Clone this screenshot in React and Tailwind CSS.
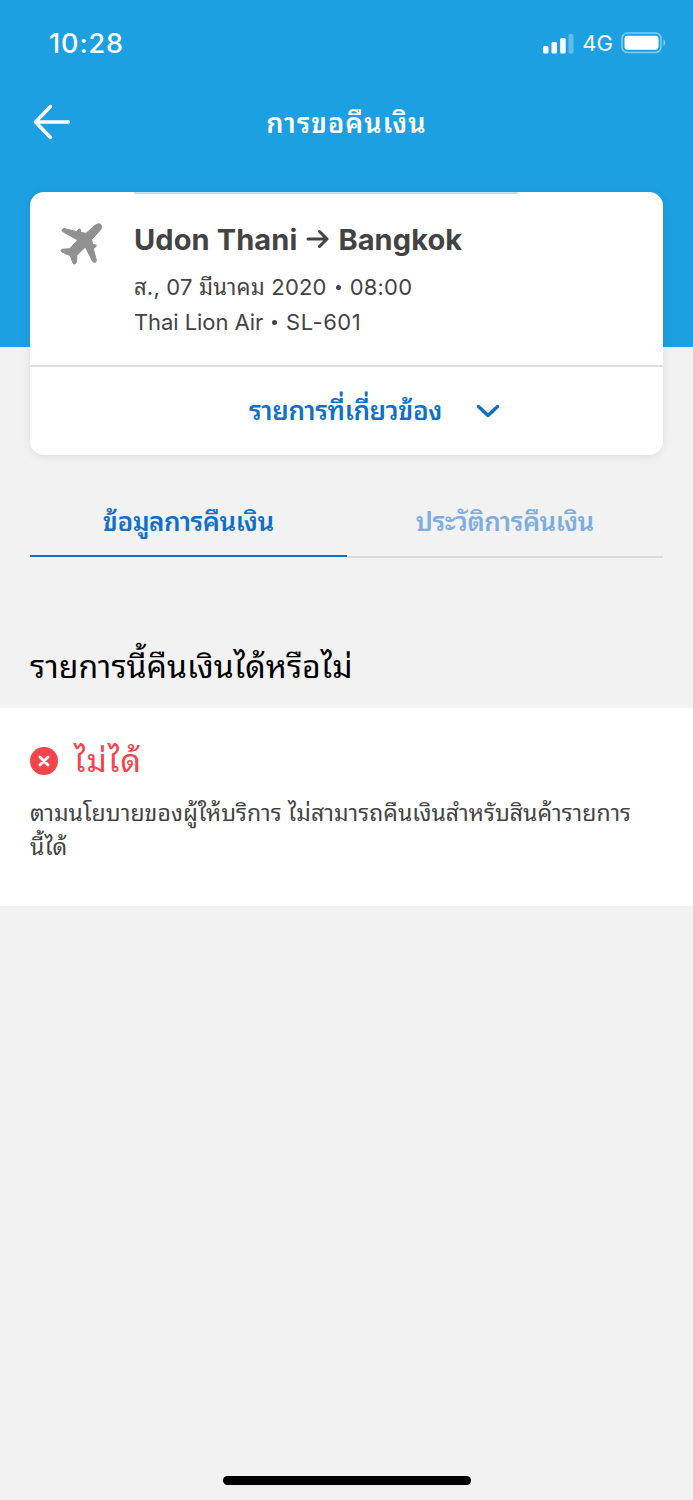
const StatusBar = () => (
  <div className="flex h-[86px] items-center justify-between pl-[49px] pr-[26px] text-white">
    <span className="text-[27px] font-medium leading-none tracking-[0.9px]">10:28</span>
    <div className="flex items-center">
      <svg className="h-[21px] w-[32px]" viewBox="0 0 32 21" fill="currentColor">
        <rect x="1" y="13" width="5.500" height="7.500" rx="1.500" />
        <rect x="9.500" y="9" width="5.500" height="11.500" rx="1.500" />
        <rect x="18.200" y="5" width="5.500" height="15.500" rx="1.500" />
        <rect x="26.500" y="1" width="5" height="19.500" rx="1.500" opacity="0.3" />
      </svg>
      <span className="ml-[8px] text-[22px] leading-none">4G</span>
      <svg className="ml-[8px] h-[22px] w-[46px]" viewBox="0 0 46 22" fill="none">
        <rect x="1" y="1" width="39" height="19.500" rx="5.500" stroke="white" strokeWidth="1.600" opacity="0.45" />
        <rect x="3.500" y="3.700" width="34" height="14" rx="3" fill="white" />
        <path d="M42.500 7.500v6.500c2.200-1.200 2.200-5.300 0-6.500z" fill="white" opacity="0.5" />
      </svg>
    </div>
  </div>
);

const TitleBar = () => (
  <div className="grid h-[72px] grid-cols-[100px_1fr_100px] items-center text-white">
    <svg className="ml-[33px] h-[36px] w-[38px]" viewBox="0 0 38 36" fill="none" stroke="currentColor" strokeWidth="3.500" strokeLinecap="round" strokeLinejoin="round">
      <path d="M17.500 2.500 2.500 18l15 15.500M2.500 18H35.500" />
    </svg>
    <h1 className="pt-[4px] text-center text-[27px] font-semibold tracking-[1.100px]">การขอคืนเงิน</h1>
  </div>
);

const PlaneIcon = () => (
  <svg className="mt-px h-[47px] w-[47px]" viewBox="115 120 141 141" fill="#919191" stroke="#919191" strokeWidth="3" strokeLinejoin="round">
    <path d="M226 136Q237 128 243 133Q248 138 244 147Q240 154 216 178L219 195Q226 192 230 196Q231 200 221 206L230 240Q231 248 223 247Q219 246 217 241L197 201L172 226L170 247Q166 256 160 250L152 227L126 216Q121 211 127 208L150 206L174 180L131 156Q125 152 128 148Q131 145 136 146L171 155Q174 147 181 147Q185 149 183 157L199 160Z" />
  </svg>
);

const Dot = () => <span className="mx-[9px] h-[5px] w-[5px] rounded-full bg-current" />;

const BookingCard = () => (
  <section className="mx-[30px] overflow-hidden rounded-[14px] bg-white shadow-[0_2px_10px_rgba(0,0,0,0.08)]">
    <div className="ml-[104px] mr-[145px] h-[2px] bg-[#c9ddea]" />
    <div className="flex h-[171px] pl-[28px] pt-[25px] text-[#434343]">
      <PlaneIcon />
      <div className="ml-[29px]">
        <h2 className="-mt-px flex h-[42px] items-center text-[29px] font-bold leading-none tracking-[0.100px]">
          Udon Thani
          <svg className="mx-[9px] h-[20px] w-[23px]" viewBox="0 0 23 20" fill="none" stroke="currentColor" strokeWidth="3" strokeLinecap="round" strokeLinejoin="round">
            <path d="M2 10H21M13.500 2.500 21 10l-7.500 7.500" />
          </svg>
          Bangkok
        </h2>
        <p className="mt-[10px] flex h-[35px] items-center text-[22px] leading-[35px] tracking-[0.200px]">
          ส., 07 มีนาคม 2020
          <Dot />
          08:00
        </p>
        <p className="flex h-[35px] items-center text-[22px] leading-[35px] tracking-[-0.080px]">
          Thai Lion Air
          <Dot />
          <span className="tracking-[0.500px]">SL-601</span>
        </p>
      </div>
    </div>
    <button className="flex h-[90px] w-full items-center justify-center gap-[34px] border-t-2 border-[#dcdcdc] pb-[2px] pl-[56px] text-[#1070c8]">
      <span className="text-[26px] font-semibold tracking-[-0.350px]">รายการที่เกี่ยวข้อง</span>
      <svg className="mt-[2px] h-[14px] w-[24px]" viewBox="0 0 24 14" fill="none" stroke="currentColor" strokeWidth="3.500" strokeLinecap="round" strokeLinejoin="round">
        <path d="M2.500 2.500 12 11.500l9.500-9" />
      </svg>
    </button>
  </section>
);

const Tabs = () => (
  <div className="mx-[30px] mt-[32px] grid h-[71px] grid-cols-2 text-[26px] font-semibold tracking-[-0.450px]">
    <button className="h-[70px] border-b-2 border-[#1070c8] text-[#1070c8]">ข้อมูลการคืนเงิน</button>
    <button className="border-b-2 border-[#dcdcdc] text-[#7eaedf]">ประวัติการคืนเงิน</button>
  </div>
);

const RefundStatus = () => (
  <section className="h-[198px] bg-white px-[30px] pt-[32px]">
    <div className="flex h-[42px] items-center gap-[16px] text-[#f5454b]">
      <svg className="h-[28px] w-[28px]" viewBox="0 0 28 28">
        <circle cx="14" cy="14" r="14" fill="currentColor" />
        <path d="M10 10l8 8M18 10l-8 8" stroke="white" strokeWidth="2.800" strokeLinecap="round" />
      </svg>
      <span className="text-[32px] leading-none tracking-[1.200px]">ไม่ได้</span>
    </div>
    <p className="mt-[14px] whitespace-nowrap text-[23px] leading-[34px] tracking-[0.050px] text-[#434343]">
      ตามนโยบายของผู้ให้บริการ ไม่สามารถคืนเงินสำหรับสินค้ารายการ
      <br />
      นี้ได้
    </p>
  </section>
);

export default function App() {
  return (
    <div className="flex h-[1500px] w-[693px] flex-col bg-[#f2f2f2] font-[Inter,'Noto_Sans_Thai_Looped','Loma','Noto_Sans_Thai','Noto_Sans',sans-serif]">
      <header className="h-[347px] shrink-0 bg-[#1ca0e2]">
        <StatusBar />
        <TitleBar />
      </header>
      <main className="-mt-[155px]">
        <BookingCard />
        <Tabs />
        <h2 className="mt-[86px] h-[64px] px-[30px] text-[32px] leading-[46px] tracking-[0.080px] text-black">รายการนี้คืนเงินได้หรือไม่</h2>
        <RefundStatus />
      </main>
      <div className="mx-auto mb-[15px] mt-auto h-[9px] w-[248px] rounded-full bg-black" />
    </div>
  );
}
